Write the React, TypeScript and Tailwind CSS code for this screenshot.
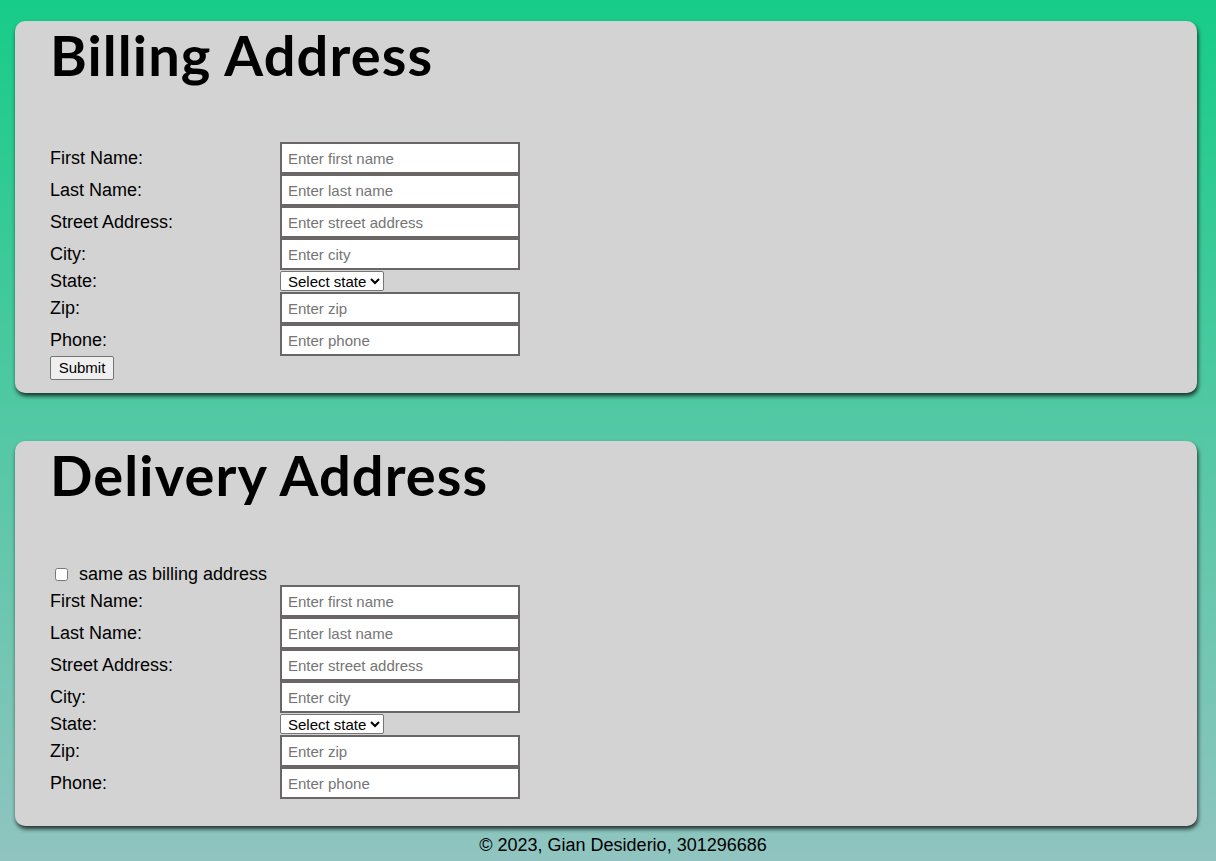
const states = ['Select state', 'AL', 'AK', 'AZ', 'CA', 'NY', 'TX'];

type Field = { label: string; placeholder?: string; select?: boolean };

const fields: Field[] = [
  { label: 'First Name:', placeholder: 'Enter first name' },
  { label: 'Last Name:', placeholder: 'Enter last name' },
  { label: 'Street Address:', placeholder: 'Enter street address' },
  { label: 'City:', placeholder: 'Enter city' },
  { label: 'State:', select: true },
  { label: 'Zip:', placeholder: 'Enter zip' },
  { label: 'Phone:', placeholder: 'Enter phone' },
];

function AddressFields() {
  return (
    <div className="grid grid-cols-[230px_240px] items-center">
      {fields.map((f) => (
        <div key={f.label} className="contents">
          <label className="text-[18px] leading-[21px]">{f.label}</label>
          {f.select ? (
            <select className="w-[104px] h-[20px] bg-white border border-[#767676] rounded-[2px] text-[15px] leading-none pl-[3px] my-[1px]">
              {states.map((s) => (
                <option key={s}>{s}</option>
              ))}
            </select>
          ) : (
            <input
              type="text"
              placeholder={f.placeholder}
              className="w-[240px] h-[32px] bg-white border-2 border-[#6b6666] px-[6px] text-[15px] placeholder:text-[#757575]"
            />
          )}
        </div>
      ))}
    </div>
  );
}

function Panel({ title, children, pb }: { title: string; children: React.ReactNode; pb: string }) {
  return (
    <section className={`bg-[#d3d3d3] rounded-[10px] shadow-[1px_3px_4px_rgba(0,0,0,0.75)] px-[35px] ${pb}`}>
      <h1 className="font-['Lato','DejaVu_Sans',sans-serif] font-bold text-[56px] leading-[66px] tracking-[1.1px] pt-[1px] mb-[54px]">{title}</h1>
      {children}
    </section>
  );
}

export default function App() {
  return (
    <div className="min-h-[861px] bg-[linear-gradient(#17cc88,#90c4c0)] font-['Liberation_Sans',Arial,sans-serif] text-black pl-[15px] pr-[19px] pt-[21px] flex flex-col">
      <Panel title="Billing Address" pb="pb-[13px]">
        <AddressFields />
        <button className="h-[24px] w-[64px] bg-[#efefef] border border-[#767676] rounded-[2px] text-[15px]">Submit</button>
      </Panel>

      <div className="h-[48px]" />

      <Panel title="Delivery Address" pb="pb-[27px]">
        <label className="flex items-center gap-[11px] ml-[5px] text-[18px] leading-[22px] pt-[1px]">
          <input type="checkbox" className="w-[13px] h-[13px]" />
          same as billing address
        </label>
        <AddressFields />
      </Panel>

      <footer className="text-center text-[18px] leading-[21px] mt-[9px] pl-[34px]">© 2023, Gian Desiderio, 301296686</footer>
    </div>
  );
}
